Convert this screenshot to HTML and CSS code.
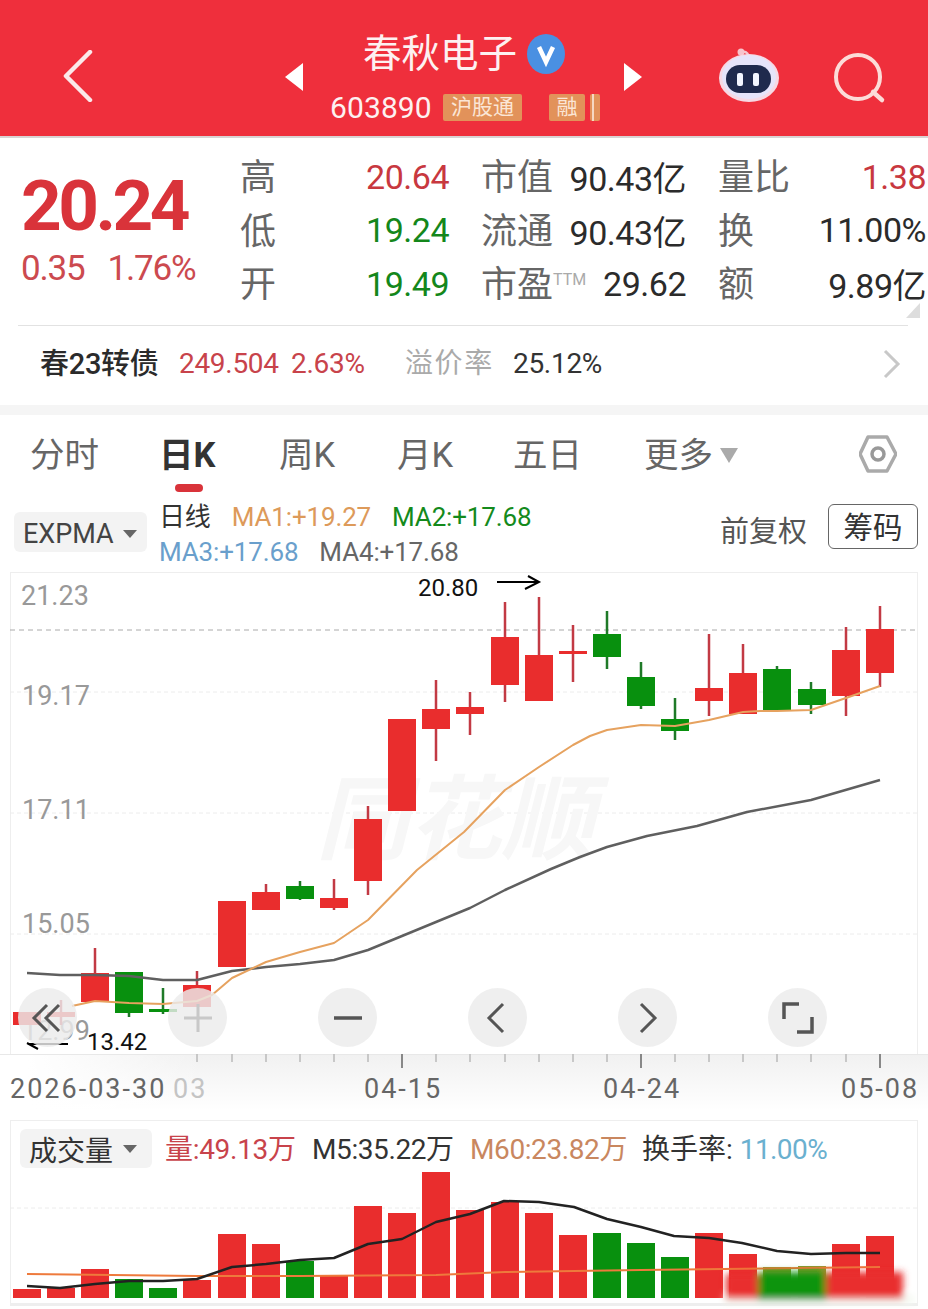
FILE: index.html
```html
<!DOCTYPE html>
<html lang="zh-CN">
<head>
    <meta charset="UTF-8">
    <title>春秋电子</title>
    <link rel="stylesheet" href="styles.css">
</head>
<body>
<div class="page">

    <!-- top bar -->
    <div class="topbar">
        <svg class="back" width="30" height="52" viewBox="0 0 30 52"><path d="M27 2 L3 26 L27 50" fill="none" stroke="#fbe9ea" stroke-width="4.5" stroke-linecap="round" stroke-linejoin="round"/></svg>
        <svg class="navArrow" width="18" height="28" viewBox="0 0 18 28"><path d="M18 0 V28 L0 14 Z" fill="#fff"/></svg>
        <div class="title">
            <div class="nameRow">
                <span class="name">春秋电子</span>
                <svg class="vBadge" width="38" height="40" viewBox="0 0 38 40"><ellipse cx="19" cy="20" rx="19" ry="20" fill="#4a90e2"/><path d="M12 13 L19 28 L26 13" fill="none" stroke="#fff" stroke-width="4.5"/></svg>
            </div>
            <div class="codeRow">
                <span class="code">603890</span>
                <span class="tag tagWide">沪股通</span>
                <span class="tag tagShort">融</span>
                <span class="tag tagCut"></span>
            </div>
        </div>
        <svg class="navArrow" width="18" height="28" viewBox="0 0 18 28"><path d="M0 0 V28 L18 14 Z" fill="#fff"/></svg>
        <svg class="robot" width="60" height="56" viewBox="0 0 60 56">
            <path d="M23 5 C28 4 30 8 30 12" fill="none" stroke="#f6c6ce" stroke-width="2.5"/>
            <circle cx="22" cy="5" r="3.5" fill="#f7c3cc"/>
            <ellipse cx="30" cy="31" rx="30" ry="24" fill="#f7d9e4"/>
            <ellipse cx="30" cy="30" rx="27" ry="22" fill="#e6e4fa"/>
            <rect x="7" y="18" width="45" height="28" rx="14" fill="#1f2a4d"/>
            <rect x="18" y="26" width="6" height="13" rx="2" fill="#f4f6ff"/>
            <rect x="34" y="26" width="6" height="13" rx="2" fill="#f4f6ff"/>
        </svg>
        <svg class="search" width="52" height="54" viewBox="0 0 52 54"><circle cx="24" cy="25" r="22" fill="none" stroke="#fcdcd8" stroke-width="4"/><path d="M39 40 L48 48" stroke="#fcdcd8" stroke-width="4.5" stroke-linecap="round"/></svg>
    </div>

    <!-- quote -->
    <div class="quote">
        <div class="priceBox">
            <div class="price">20.24</div>
            <div class="change"><span>0.35</span><span>1.76%</span></div>
        </div>
        <div class="stats">
            <div class="stat"><span class="statLabel">高</span><span class="up">20.64</span></div>
            <div class="stat"><span class="statLabel">市值</span><span>90.43亿</span></div>
            <div class="stat"><span class="statLabel">量比</span><span class="up">1.38</span></div>
            <div class="stat"><span class="statLabel">低</span><span class="down">19.24</span></div>
            <div class="stat"><span class="statLabel">流通</span><span>90.43亿</span></div>
            <div class="stat"><span class="statLabel">换</span><span>11.00%</span></div>
            <div class="stat"><span class="statLabel">开</span><span class="down">19.49</span></div>
            <div class="stat"><span class="statLabel">市盈<sup class="ttm">TTM</sup></span><span>29.62</span></div>
            <div class="stat"><span class="statLabel">额</span><span>9.89亿</span></div>
        </div>
        <div class="corner"></div>
    </div>
    <div class="sep"></div>

    <!-- bond -->
    <div class="bond">
        <span class="bondName">春23转债</span>
        <span class="bondPrice">249.504</span>
        <span class="bondPct">2.63%</span>
        <span class="bondLabel">溢价率</span>
        <span class="bondPremium">25.12%</span>
        <svg class="bondMore" width="18" height="30" viewBox="0 0 18 30"><path d="M2 2 L15 15 L2 28" fill="none" stroke="#c8c8c8" stroke-width="3"/></svg>
    </div>
    <div class="band"></div>

    <!-- tabs -->
    <div class="tabs">
        <span class="tab tabWide">分时</span>
        <span class="tab tabActive">日K</span>
        <span class="tab">周K</span>
        <span class="tab">月K</span>
        <span class="tab tabWide tabFive">五日</span>
        <span class="tab tabMore">更多<i class="caret caretBig"></i></span>
        <svg class="gear" width="38" height="38" viewBox="0 0 38 38"><path d="M9 2 H28 L37 19 L28 36 H9 L1 19 Z" fill="none" stroke="#aaa" stroke-width="3.5" stroke-linejoin="round"/><circle cx="19" cy="19" r="6" fill="none" stroke="#999" stroke-width="3.5"/></svg>
    </div>

    <!-- indicator row -->
    <div class="indicators">
        <div class="chip chipExpma">EXPMA<i class="caret"></i></div>
        <div class="maLines">
            <div class="maRow"><span class="dayLine">日线</span><span class="ma1">MA1:+19.27</span><span class="ma2">MA2:+17.68</span></div>
            <div class="maRow"><span class="ma3">MA3:+17.68</span><span class="ma4">MA4:+17.68</span></div>
        </div>
        <span class="adjust">前复权</span>
        <span class="chipBtn">筹码</span>
    </div>

    <!-- k line -->
    <div class="chart">
        <svg class="plot" width="908" height="482" viewBox="10 572 908 482">
            <line class="gridDark" x1="10" y1="630" x2="918" y2="630"/>
            <line class="grid" x1="10" y1="692" x2="918" y2="692"/>
            <line class="grid" x1="10" y1="813" x2="918" y2="813"/>
            <line class="grid" x1="10" y1="934" x2="918" y2="934"/>

            <text class="mark" x="316" y="852" textLength="278" lengthAdjust="spacingAndGlyphs">同花顺</text>

            <text class="yLabel" x="21" y="605">21.23</text>
            <text class="yLabel" x="22" y="705">19.17</text>
            <text class="yLabel" x="22" y="819">17.11</text>
            <text class="yLabel" x="22" y="933">15.05</text>
            <text class="yLabel" x="22" y="1040">12.99</text>

            <!-- wicks -->
            <path class="wickUp" d="M61 1000V1025 M95 948V1002 M197 971V1007 M266 884V910 M334 879V910 M368 806V895 M436 680V761 M470 692V735 M505 602V702 M539 597V701 M573 625V682 M709 634V716 M743 644V714 M846 627V716 M880 606V687"/>
            <path class="wickDown" d="M129 972V1017 M163 988V1014 M300 881V900 M607 611V669 M641 662V709 M675 698V740 M777 666V710 M811 682V714"/>
            <!-- bodies -->
            <g class="up">
                <rect x="13" y="1012" width="28" height="13"/>
                <rect x="47" y="1012" width="28" height="5"/>
                <rect x="81" y="973" width="28" height="29"/>
                <rect x="183" y="985" width="28" height="22"/>
                <rect x="218" y="901" width="28" height="66"/>
                <rect x="252" y="892" width="28" height="18"/>
                <rect x="320" y="898" width="28" height="10"/>
                <rect x="354" y="819" width="28" height="62"/>
                <rect x="388" y="719" width="28" height="92"/>
                <rect x="422" y="709" width="28" height="20"/>
                <rect x="456" y="707" width="28" height="7"/>
                <rect x="491" y="637" width="28" height="48"/>
                <rect x="525" y="655" width="28" height="46"/>
                <rect x="559" y="651" width="28" height="3"/>
                <rect x="695" y="688" width="28" height="13"/>
                <rect x="729" y="673" width="28" height="41"/>
                <rect x="832" y="650" width="28" height="46"/>
                <rect x="866" y="629" width="28" height="44"/>
            </g>
            <g class="down">
                <rect x="115" y="972" width="28" height="41"/>
                <rect x="149" y="1009" width="28" height="3"/>
                <rect x="286" y="886" width="28" height="13"/>
                <rect x="593" y="634" width="28" height="23"/>
                <rect x="627" y="677" width="28" height="29"/>
                <rect x="661" y="719" width="28" height="12"/>
                <rect x="763" y="669" width="28" height="41"/>
                <rect x="798" y="689" width="28" height="16"/>
            </g>
            <polyline class="maGrey" points="27,973 60,975 95,975 129,976 163,980 197,980 232,971 266,967 300,964 334,960 368,950 402,936 436,922 470,908 505,890 551,869 580,857 607,847 647,836 697,826 747,812 811,800 880,780"/>
            <polyline class="maOrange" points="72,1006 95,1001 129,1003 163,1004 197,1001 212,995 232,978 266,962 300,952 334,943 368,920 417,870 464,832 505,790 539,767 573,745 590,736 607,730 641,725 675,726 709,720 743,712 760,711 777,711 811,710 846,698 880,686"/>

            <path class="extremeArrow" d="M497 582H538 M528 576L539 582L525 589"/>
            <path class="extremeArrow" d="M68 1044H28 M38 1049L27 1043"/>
        </svg>
        <span class="extreme extremeHigh">20.80</span>
        <span class="extreme extremeLow">13.42</span>
        <div class="zoomBar">
            <span class="roundBtn"><svg width="36" height="36" viewBox="0 0 36 36"><path d="M17 5 L4 18 L17 31 M29 5 L16 18 L29 31" fill="none" stroke="#555" stroke-width="3"/></svg></span>
            <span class="roundBtn"><svg width="36" height="36" viewBox="0 0 36 36"><path d="M18 4V32 M4 18H32" fill="none" stroke="#c8c8c8" stroke-width="3"/></svg></span>
            <span class="roundBtn"><svg width="36" height="36" viewBox="0 0 36 36"><path d="M4 18H32" fill="none" stroke="#555" stroke-width="3.5"/></svg></span>
            <span class="roundBtn"><svg width="36" height="36" viewBox="0 0 36 36"><path d="M23 4 L9 18 L23 32" fill="none" stroke="#555" stroke-width="3"/></svg></span>
            <span class="roundBtn"><svg width="36" height="36" viewBox="0 0 36 36"><path d="M11 4 L25 18 L11 32" fill="none" stroke="#555" stroke-width="3"/></svg></span>
            <span class="roundBtn"><svg width="36" height="36" viewBox="0 0 36 36"><path d="M19 4H4V19 M17 32H32V17" fill="none" stroke="#555" stroke-width="3.5"/></svg></span>
        </div>
    </div>

    <!-- date axis -->
    <div class="axis">
        <svg class="axisSvg" width="928" height="66" viewBox="0 1054 928 66">
            <path class="tick" d="M197 1054V1062 M232 1054V1062 M266 1054V1062 M300 1054V1062 M334 1054V1062 M368 1054V1062 M436 1054V1062 M470 1054V1062 M505 1054V1062 M539 1054V1062 M573 1054V1062 M607 1054V1062 M675 1054V1062 M709 1054V1062 M743 1054V1062 M777 1054V1062 M811 1054V1062 M846 1054V1062"/>
            <path class="tickBig" d="M402 1054V1068 M641 1054V1068 M880 1054V1068"/>
            <text class="xLabel" x="10" y="1098">2026-03-30</text>
            <text class="xLabel xFaint" x="173" y="1098">03</text>
            <text class="xLabel" x="364" y="1098">04-15</text>
            <text class="xLabel" x="603" y="1098">04-24</text>
            <text class="xLabel" x="841" y="1098">05-08</text>
        </svg>
    </div>

    <!-- volume -->
    <div class="volume">
        <div class="volHead">
            <div class="chip chipVol">成交量<i class="caret"></i></div>
            <span class="volQty">量:49.13万</span>
            <span class="volM5">M5:35.22万</span>
            <span class="volM60">M60:23.82万</span>
            <span class="volRate">换手率:<em>11.00%</em></span>
        </div>
        <svg class="volPlot" width="908" height="140" viewBox="10 1168 908 140">
            <defs><filter id="smudge" x="-10%" y="-30%" width="120%" height="160%"><feGaussianBlur stdDeviation="3.5"/></filter></defs>
            <line class="grid" x1="10" y1="1208" x2="918" y2="1208"/>
            <g class="up">
                <rect x="13" y="1289" width="28" height="9"/>
                <rect x="47" y="1288" width="28" height="10"/>
                <rect x="81" y="1269" width="28" height="29"/>
                <rect x="183" y="1280" width="28" height="18"/>
                <rect x="218" y="1234" width="28" height="64"/>
                <rect x="252" y="1244" width="28" height="54"/>
                <rect x="320" y="1276" width="28" height="22"/>
                <rect x="354" y="1206" width="28" height="92"/>
                <rect x="388" y="1213" width="28" height="85"/>
                <rect x="422" y="1172" width="28" height="126"/>
                <rect x="456" y="1210" width="28" height="88"/>
                <rect x="491" y="1202" width="28" height="96"/>
                <rect x="525" y="1213" width="28" height="85"/>
                <rect x="559" y="1235" width="28" height="63"/>
                <rect x="695" y="1233" width="28" height="65"/>
                <rect x="729" y="1254" width="28" height="44"/>
                <rect x="832" y="1244" width="28" height="54"/>
                <rect x="866" y="1236" width="28" height="62"/>
            </g>
            <g class="down">
                <rect x="115" y="1279" width="28" height="19"/>
                <rect x="149" y="1288" width="28" height="10"/>
                <rect x="286" y="1261" width="28" height="37"/>
                <rect x="593" y="1233" width="28" height="65"/>
                <rect x="627" y="1243" width="28" height="55"/>
                <rect x="661" y="1257" width="28" height="41"/>
            </g>
            <rect class="volOlive" x="763" y="1267" width="28" height="31"/>
            <rect class="volOlive" x="798" y="1266" width="28" height="32"/>
            <polyline class="maFlat" points="27,1274 197,1276 300,1276 436,1275 505,1272 641,1270 880,1267"/>
            <polyline class="maBlack" points="27,1286 60,1288 95,1284 129,1281 163,1281 197,1279 232,1267 266,1264 300,1260 334,1258 368,1244 402,1239 436,1222 470,1214 504,1201 539,1202 574,1207 607,1219 641,1227 674,1236 709,1238 742,1243 777,1251 811,1254 846,1253 880,1253"/>
            <g filter="url(#smudge)">
                <rect class="smudgeWhite" x="724" y="1295" width="190" height="9"/>
                <rect class="smudgeRed" x="726" y="1274" width="32" height="25"/>
                <rect class="smudgeGreen" x="758" y="1272" width="68" height="28"/>
                <rect class="smudgeRed" x="826" y="1272" width="77" height="27"/>
            </g>
        </svg>
    </div>
</div>
</body>
</html>
```

FILE: styles.css
```css
*{
    padding: 0;
    margin: 0;
    box-sizing: border-box;
}
body{
    background-color: #fff;
    font-family: Roboto, "Noto Sans CJK SC", sans-serif;
    color: #2b2b2b;
}
.page{
    width: 928px;
    height: 1309px;
    overflow: hidden;
    position: relative;
}

/* top bar */
.topbar{
    height: 138px;
    padding-left: 63px;
    display: flex;
    align-items: flex-start;
    background-color: #ef2f3c;
    border-bottom: 2px solid #d9d3d3;
}
.back{
    margin-top: 50px;
    margin-right: 192px;
}
.navArrow{
    margin-top: 63px;
    flex-shrink: 0;
}
.title{
    width: 321px;
}
.nameRow{
    height: 74px;
    padding-left: 60px;
    padding-top: 34px;
    display: flex;
    align-items: center;
    color: #fdf1f1;
}
.name{
    font-size: 38.5px;
    line-height: 40px;
}
.vBadge{
    margin-left: 10px;
}
.codeRow{
    padding-left: 27px;
    display: flex;
    align-items: center;
    height: 30px;
    margin-top: 18px;
}
.code{
    font-size: 30px;
    color: #fdf1f1;
    width: 113px;
    letter-spacing: .1px;
}
.tag{
    height: 27px;
    line-height: 26px;
    background-color: #e2925a;
    color: #fbe6d6;
    font-size: 21px;
    text-align: center;
    border-radius: 2px;
}
.tagWide{
    width: 79px;
}
.tagShort{
    width: 36px;
    margin-left: 27px;
}
.tagCut{
    width: 10px;
    margin-left: 5px;
    background: linear-gradient(90deg, #e2925a 25%, #f6d8c2 25%, #f6d8c2 45%, #e2925a 45%);
}
.robot{
    margin-left: 77px;
    margin-top: 47px;
    flex-shrink: 0;
}
.search{
    margin-left: 55px;
    margin-top: 52px;
    flex-shrink: 0;
}

/* quote */
.quote{
    height: 187px;
    display: flex;
    position: relative;
}
.priceBox{
    width: 240px;
    padding-left: 21px;
}
.price{
    font-size: 71px;
    font-weight: 700;
    line-height: 70px;
    margin-top: 33px;
    letter-spacing: -3.5px;
    color: #d9333a;
}
.change{
    margin-top: 6px;
    font-size: 35px;
    line-height: 44px;
    letter-spacing: -1.2px;
    color: #cc4a4f;
    display: flex;
    gap: 23px;
}
.stats{
    padding-top: 12px;
    width: 688px;
    display: grid;
    grid-template-columns: 210px 206px 209px;
    column-gap: 31px;
    grid-auto-rows: 53.5px;
    font-size: 34px;
    letter-spacing: -.5px;
}
.stat{
    display: flex;
    justify-content: space-between;
    align-items: center;
    padding-right: 1px;
    white-space: nowrap;
}
.statLabel{
    font-size: 36px;
    line-height: 40px;
    margin-top: 3px;
    color: #666;
    letter-spacing: 0;
}
.ttm{
    font-size: 16px;
    color: #aaa;
    vertical-align: 12px;
    line-height: 0;
}
.up{
    color: #c8383f;
    fill: #e92d2d;
}
.down{
    color: #14871b;
    fill: #08900e;
}
.corner{
    position: absolute;
    right: 8px;
    bottom: 7px;
    width: 0;
    height: 0;
    border-left: 14px solid transparent;
    border-bottom: 15px solid #ddd;
}
.sep{
    height: 1px;
    margin: 0 20px 0 18px;
    background-color: #e2e2e2;
}

/* bond */
.bond{
    height: 79px;
    padding-left: 40px;
    padding-bottom: 4px;
    display: flex;
    align-items: center;
    font-size: 28px;
    letter-spacing: -.3px;
}
.bondName{
    width: 139px;
    font-size: 29px;
    font-weight: 500;
    line-height: 34px;
    letter-spacing: -.3px;
    white-space: nowrap;
}
.bondPrice{
    width: 112px;
    color: #c8434b;
}
.bondPct{
    width: 114px;
    color: #c8434b;
}
.bondLabel{
    width: 108px;
    color: #aaa;
    font-size: 28px;
    line-height: 34px;
    letter-spacing: 1.6px;
}
.bondPremium{
    color: #333;
}
.bondMore{
    margin-left: auto;
    margin-right: 27px;
}
.band{
    height: 10px;
    background-color: #f5f5f5;
}

/* tabs */
.tabs{
    height: 80px;
    padding-left: 30px;
    padding-top: 16px;
    display: flex;
    align-items: flex-start;
    position: relative;
}
.tab{
    width: 118px;
    font-size: 34.5px;
    line-height: 48px;
    color: #666;
}
.tabWide{
    width: 131px;
}
.tabFive{
    margin-left: -2px;
}
.tabActive{
    width: 120px;
    margin-left: -2px;
    font-weight: 700;
    color: #333;
    position: relative;
}
.tabActive::after{
    content: "";
    position: absolute;
    left: 16px;
    top: 53px;
    width: 28px;
    height: 8px;
    border-radius: 4px;
    background-color: #d9333a;
}
.tabMore{
    display: flex;
    align-items: center;
    width: 215px;
}
.gear{
    margin-top: 4px;
}
.caret{
    display: inline-block;
    width: 0;
    height: 0;
    margin-left: 9px;
    border-left: 7px solid transparent;
    border-right: 7px solid transparent;
    border-top: 8px solid #666;
}
.caretBig{
    margin-left: 7px;
    border-left-width: 9px;
    border-right-width: 9px;
    border-top: 15px solid #aaa;
}

/* indicator row */
.indicators{
    height: 77px;
    padding-left: 14px;
    display: flex;
    position: relative;
}
.chip{
    background-color: #f3f3f3;
    border-radius: 6px;
    display: flex;
    align-items: center;
    white-space: nowrap;
}
.chipExpma{
    width: 133px;
    height: 40px;
    margin-top: 17px;
    padding-left: 9px;
    padding-top: 3px;
    font-size: 27px;
    color: #444;
}
.maLines{
    margin-left: 12px;
    font-size: 26px;
    letter-spacing: -.15px;
    line-height: 35px;
    margin-top: 5px;
}
.maRow{
    display: flex;
    gap: 21px;
    white-space: nowrap;
}
.dayLine{
    color: #333;
}
.ma1{
    color: #dd9a5a;
}
.ma2{
    color: #148a1c;
}
.ma3{
    color: #6a9fcc;
}
.ma4{
    color: #666;
}
.adjust{
    position: absolute;
    left: 720px;
    top: 13px;
    font-size: 29px;
    color: #555;
}
.chipBtn{
    position: absolute;
    left: 828px;
    top: 9px;
    width: 90px;
    height: 45px;
    line-height: 46px;
    text-align: center;
    font-size: 29.5px;
    border: 1px solid #666;
    border-radius: 6px;
    color: #333;
}

/* k line */
.chart{
    width: 908px;
    height: 482px;
    margin-left: 10px;
    position: relative;
    border: 1px solid #eee;
    border-bottom: 0;
}
.plot{
    display: block;
    margin: -1px 0 0 -1px;
}
.grid{
    stroke: #ececec;
    stroke-width: 1;
    stroke-dasharray: 4 3;
}
.gridDark{
    stroke: #aaa;
    stroke-width: 1;
    stroke-dasharray: 5 4;
}
.mark{
    font-size: 92px;
    font-weight: 700;
    font-style: italic;
    fill: #f7f7f7;
}
.yLabel{
    font-size: 27px;
    fill: #999;
}
.wickUp{
    stroke: #c23a44;
    stroke-width: 2.5;
    fill: none;
}
.wickDown{
    stroke: #1f7a28;
    stroke-width: 2.5;
    fill: none;
}
.maGrey{
    fill: none;
    stroke: #5f5f5f;
    stroke-width: 2.5;
    stroke-linejoin: round;
}
.maOrange{
    fill: none;
    stroke: #e6a25f;
    stroke-width: 2;
    stroke-linejoin: round;
}
.extreme{
    position: absolute;
    font-size: 24px;
    line-height: 28px;
    color: #111;
}
.extremeHigh{
    left: 407px;
    top: 1px;
}
.extremeLow{
    left: 76px;
    top: 455px;
}
.extremeArrow{
    fill: none;
    stroke: #000;
    stroke-width: 2;
}
.zoomBar{
    position: absolute;
    left: 7px;
    top: 415px;
    display: flex;
    gap: 91px;
}
.roundBtn{
    width: 59px;
    height: 59px;
    border-radius: 50%;
    background-color: rgba(236, 236, 236, .82);
    display: flex;
    align-items: center;
    justify-content: center;
}

/* date axis */
.axis{
    height: 66px;
    background: linear-gradient(90deg, #fff 3%, rgba(255, 255, 255, 0) 22%), linear-gradient(180deg, #f1f1f1, #fff 85%);
    border-top: 1px solid #e8e8e8;
}
.axisSvg{
    display: block;
    margin-top: -1px;
}
.tick{
    stroke: #bbb;
    stroke-width: 1.5;
}
.tickBig{
    stroke: #888;
    stroke-width: 2;
}
.xLabel{
    font-size: 27px;
    letter-spacing: 2px;
    fill: #666;
}
.xFaint{
    fill: #c4c4c4;
}

/* volume */
.volume{
    width: 908px;
    height: 186px;
    margin-left: 10px;
    border: 1px solid #eee;
    border-bottom: 3px solid #eee;
    position: relative;
}
.volHead{
    height: 47px;
    padding-top: 8px;
    padding-left: 9px;
    display: flex;
    align-items: center;
    font-size: 28px;
    white-space: nowrap;
}
.chipVol{
    width: 132px;
    height: 39px;
    padding-left: 9px;
    margin-right: 13px;
    font-size: 28px;
    color: #333;
}
.chipVol .caret{
    margin-left: 10px;
}
.volQty{
    width: 147px;
    letter-spacing: -.3px;
    color: #c8434b;
    margin-top: -3px;
}
.volM5{
    width: 158px;
    letter-spacing: -.4px;
    color: #333;
    margin-top: -3px;
}
.volM60{
    width: 172px;
    letter-spacing: -.4px;
    color: #c9875f;
    margin-top: -3px;
}
.volRate{
    color: #333;
    margin-top: -3px;
}
.volRate em{
    font-style: normal;
    margin-left: 7px;
    letter-spacing: -.6px;
    color: #6ab0cf;
}
.volPlot{
    display: block;
    margin-left: -1px;
}
.volOlive{
    fill: #8a9a30;
}
.maFlat{
    fill: none;
    stroke: #ee7a3c;
    stroke-width: 2;
}
.maBlack{
    fill: none;
    stroke: #222;
    stroke-width: 2.5;
    stroke-linejoin: round;
}
.smudgeWhite{
    fill: #f4f9f2;
}
.smudgeRed{
    fill: #e92d2d;
}
.smudgeGreen{
    fill: #0a9410;
}
```
